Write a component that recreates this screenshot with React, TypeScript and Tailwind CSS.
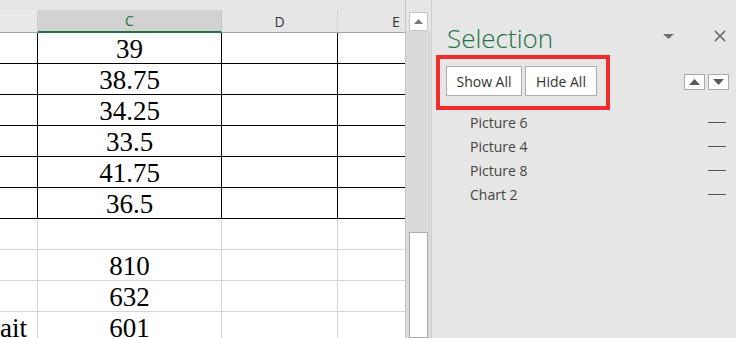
const rows = [
  { b: '', c: '39', strong: true },
  { b: '', c: '38.75', strong: true },
  { b: '', c: '34.25', strong: true },
  { b: '', c: '33.5', strong: true },
  { b: '', c: '41.75', strong: true },
  { b: '', c: '36.5', strong: true },
  { b: '', c: '', strong: false },
  { b: '', c: '810', strong: false },
  { b: '', c: '632', strong: false },
  { b: 'ait', c: '601', strong: false },
]

const items = ['Picture 6', 'Picture 4', 'Picture 8', 'Chart 2']

const ui = { fontFamily: '"Open Sans", "Noto Sans", sans-serif' }
const serif = { fontFamily: '"Liberation Serif", "Times New Roman", serif' }

function Sheet() {
  return (
    <div className="w-[406px] shrink-0 overflow-hidden border-r border-[#c4c4c4]">
      <div className="h-[10px]" />
      {/* column headers */}
      <div className="flex h-[23px] text-[14px] text-[#333]" style={ui}>
        <div className="w-[38px] shrink-0 border-r border-b border-r-[#d0d0d0] border-b-[#a6a6a6] bg-[#e9e9e9]" />
        <div className="flex w-[184px] shrink-0 items-center justify-center border-r border-b-2 border-r-[#c4c4c4] border-b-[#217346] bg-[#d2d2d2] text-[#217346]">
          C
        </div>
        <div className="flex w-[116px] shrink-0 items-center justify-center border-r border-b border-r-[#d0d0d0] border-b-[#a6a6a6]">
          D
        </div>
        <div className="flex w-[116px] shrink-0 items-center justify-center border-b border-b-[#a6a6a6]">
          E
        </div>
      </div>
      {/* cells */}
      <div className="bg-white text-[27px] leading-none text-black" style={serif}>
        {rows.map((r, i) => {
          const line = r.strong ? 'border-black' : 'border-[#d4d4d4]'
          const side = r.strong ? 'border-r-black' : 'border-r-[#d4d4d4]'
          return (
            <div key={i} className={`flex h-[31px] border-b ${line}`}>
              <div className={`flex w-[38px] shrink-0 items-end border-r ${side}`}>{r.b}</div>
              <div className={`flex w-[184px] shrink-0 items-end justify-center border-r ${side}`}>{r.c}</div>
              <div className={`w-[116px] shrink-0 border-r ${side}`} />
              <div className="w-[116px] shrink-0" />
            </div>
          )
        })}
      </div>
    </div>
  )
}

function ScrollBar() {
  return (
    <div className="flex w-[25px] shrink-0 flex-col">
      <div className="px-[3px] pt-[12px]">
        <div className="flex h-[19px] items-center justify-center border border-[#c8c8c8] bg-white">
          <svg width="9" height="5" viewBox="0 0 9 5">
            <path d="M0 5 L4.5 0 L9 5 Z" fill="#7a7a7a" />
          </svg>
        </div>
      </div>
      <div className="flex flex-1 flex-col bg-[#dadada] px-[3px] pt-[201px]">
        <div className="flex-1 border border-[#ababab] bg-white" />
      </div>
    </div>
  )
}

function SelectionPane() {
  return (
    <div className="flex flex-1 flex-col border-l border-[#cfcfcf]" style={ui}>
      <div className="flex items-start pt-[25px] pl-[15px]">
        <div className="text-[26px] leading-none font-light text-[#217346]">Selection</div>
        <svg className="mt-[9px] ml-[110px]" width="11" height="5" viewBox="0 0 11 5">
          <path d="M0 0 L11 0 L5.5 5 Z" fill="#707070" />
        </svg>
        <svg className="mt-[5px] ml-[40px]" width="12" height="12" viewBox="0 0 12 12">
          <path d="M1 1 L11 11 M11 1 L1 11" stroke="#666" strokeWidth="1.6" />
        </svg>
      </div>
      <div className="mt-[4px] flex items-start">
        <div className="ml-[4px] flex gap-[3px] border-4 border-[#f12b2b] pt-[7px] pr-[9px] pb-[10px] pl-[6px]">
          <button className="h-[30px] w-[76px] border border-[#adadad] bg-white text-[14px] text-[#333]">Show All</button>
          <button className="h-[30px] w-[72px] border border-[#adadad] bg-white text-[14px] text-[#333]">Hide All</button>
        </div>
        <div className="mt-[19px] ml-[74px] flex gap-[3px]">
          <div className="flex h-[16px] w-[21px] items-center justify-center border border-[#a9a9a9] bg-white">
            <svg width="11" height="6" viewBox="0 0 11 6">
              <path d="M0 6 L5.5 0 L11 6 Z" fill="#5a5a5a" />
            </svg>
          </div>
          <div className="flex h-[16px] w-[21px] items-center justify-center border border-[#a9a9a9] bg-white">
            <svg width="11" height="6" viewBox="0 0 11 6">
              <path d="M0 0 L11 0 L5.5 6 Z" fill="#5a5a5a" />
            </svg>
          </div>
        </div>
      </div>
      <div className="flex flex-col">
        {items.map((name) => (
          <div key={name} className="flex h-[24px] items-center text-[14px] text-[#444]">
            <span className="pl-[38px]">{name}</span>
            <span className="ml-auto mr-[10px] h-px w-[18px] bg-[#555]" />
          </div>
        ))}
      </div>
    </div>
  )
}

export default function App() {
  return (
    <div className="flex h-[338px] w-[736px] overflow-hidden bg-[#e6e6e6]">
      <Sheet />
      <ScrollBar />
      <SelectionPane />
    </div>
  )
}
